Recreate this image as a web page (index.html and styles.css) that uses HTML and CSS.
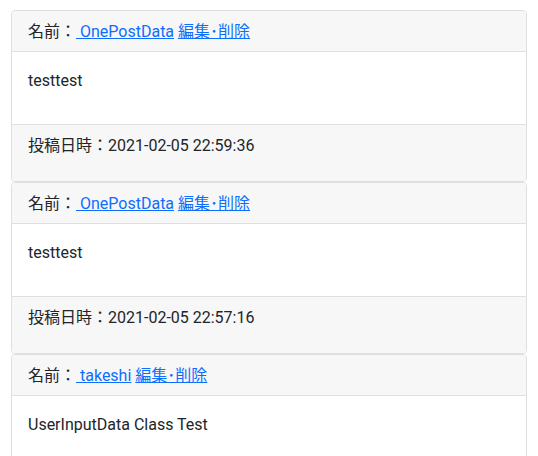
FILE: index.html
```html
<!DOCTYPE html>
<html lang="ja">
<head>
<meta charset="utf-8">
<link rel="stylesheet" href="styles.css">
</head>
<body>
<div class="list">
  <div class="card">
    <div class="card-header">名前：<a href="#">&nbsp;OnePostData</a> <a href="#">編集･削除</a></div>
    <div class="card-body"><p>testtest</p></div>
    <div class="card-footer"><p>投稿日時：2021-02-05 22:59:36</p></div>
  </div>
  <div class="card">
    <div class="card-header">名前：<a href="#">&nbsp;OnePostData</a> <a href="#">編集･削除</a></div>
    <div class="card-body"><p>testtest</p></div>
    <div class="card-footer"><p>投稿日時：2021-02-05 22:57:16</p></div>
  </div>
  <div class="card">
    <div class="card-header">名前：<a href="#">&nbsp;takeshi</a> <a href="#">編集･削除</a></div>
    <div class="card-body"><p>UserInputData Class Test</p></div>
  </div>
</div>
</body>
</html>
```
FILE: styles.css
```css
* { box-sizing: border-box; }
html, body { margin: 0; padding: 0; background: #fff; }
body {
  font-family: Roboto, "Noto Sans CJK JP", sans-serif;
  font-size: 16px;
  line-height: 1.5;
  color: #212529;
}
.list {
  padding: 10px 11px;
  display: flex;
  flex-direction: column;
}
.card {
  border: 1px solid #dfdfdf;
  border-radius: 4px;
  background: #fff;
  overflow: hidden;
}
.card-header {
  padding: 9px 16px 7px;
  background: #f7f7f7;
  border-bottom: 1px solid #dfdfdf;
}
.card-body {
  padding: 17px 16px 15px;
}
.card-footer {
  padding: 9px 16px 7px;
  background: #f7f7f7;
  border-top: 1px solid #dfdfdf;
}
p { margin: 0 0 16px; }
a { color: #0d6efd; text-decoration: underline; }
```
